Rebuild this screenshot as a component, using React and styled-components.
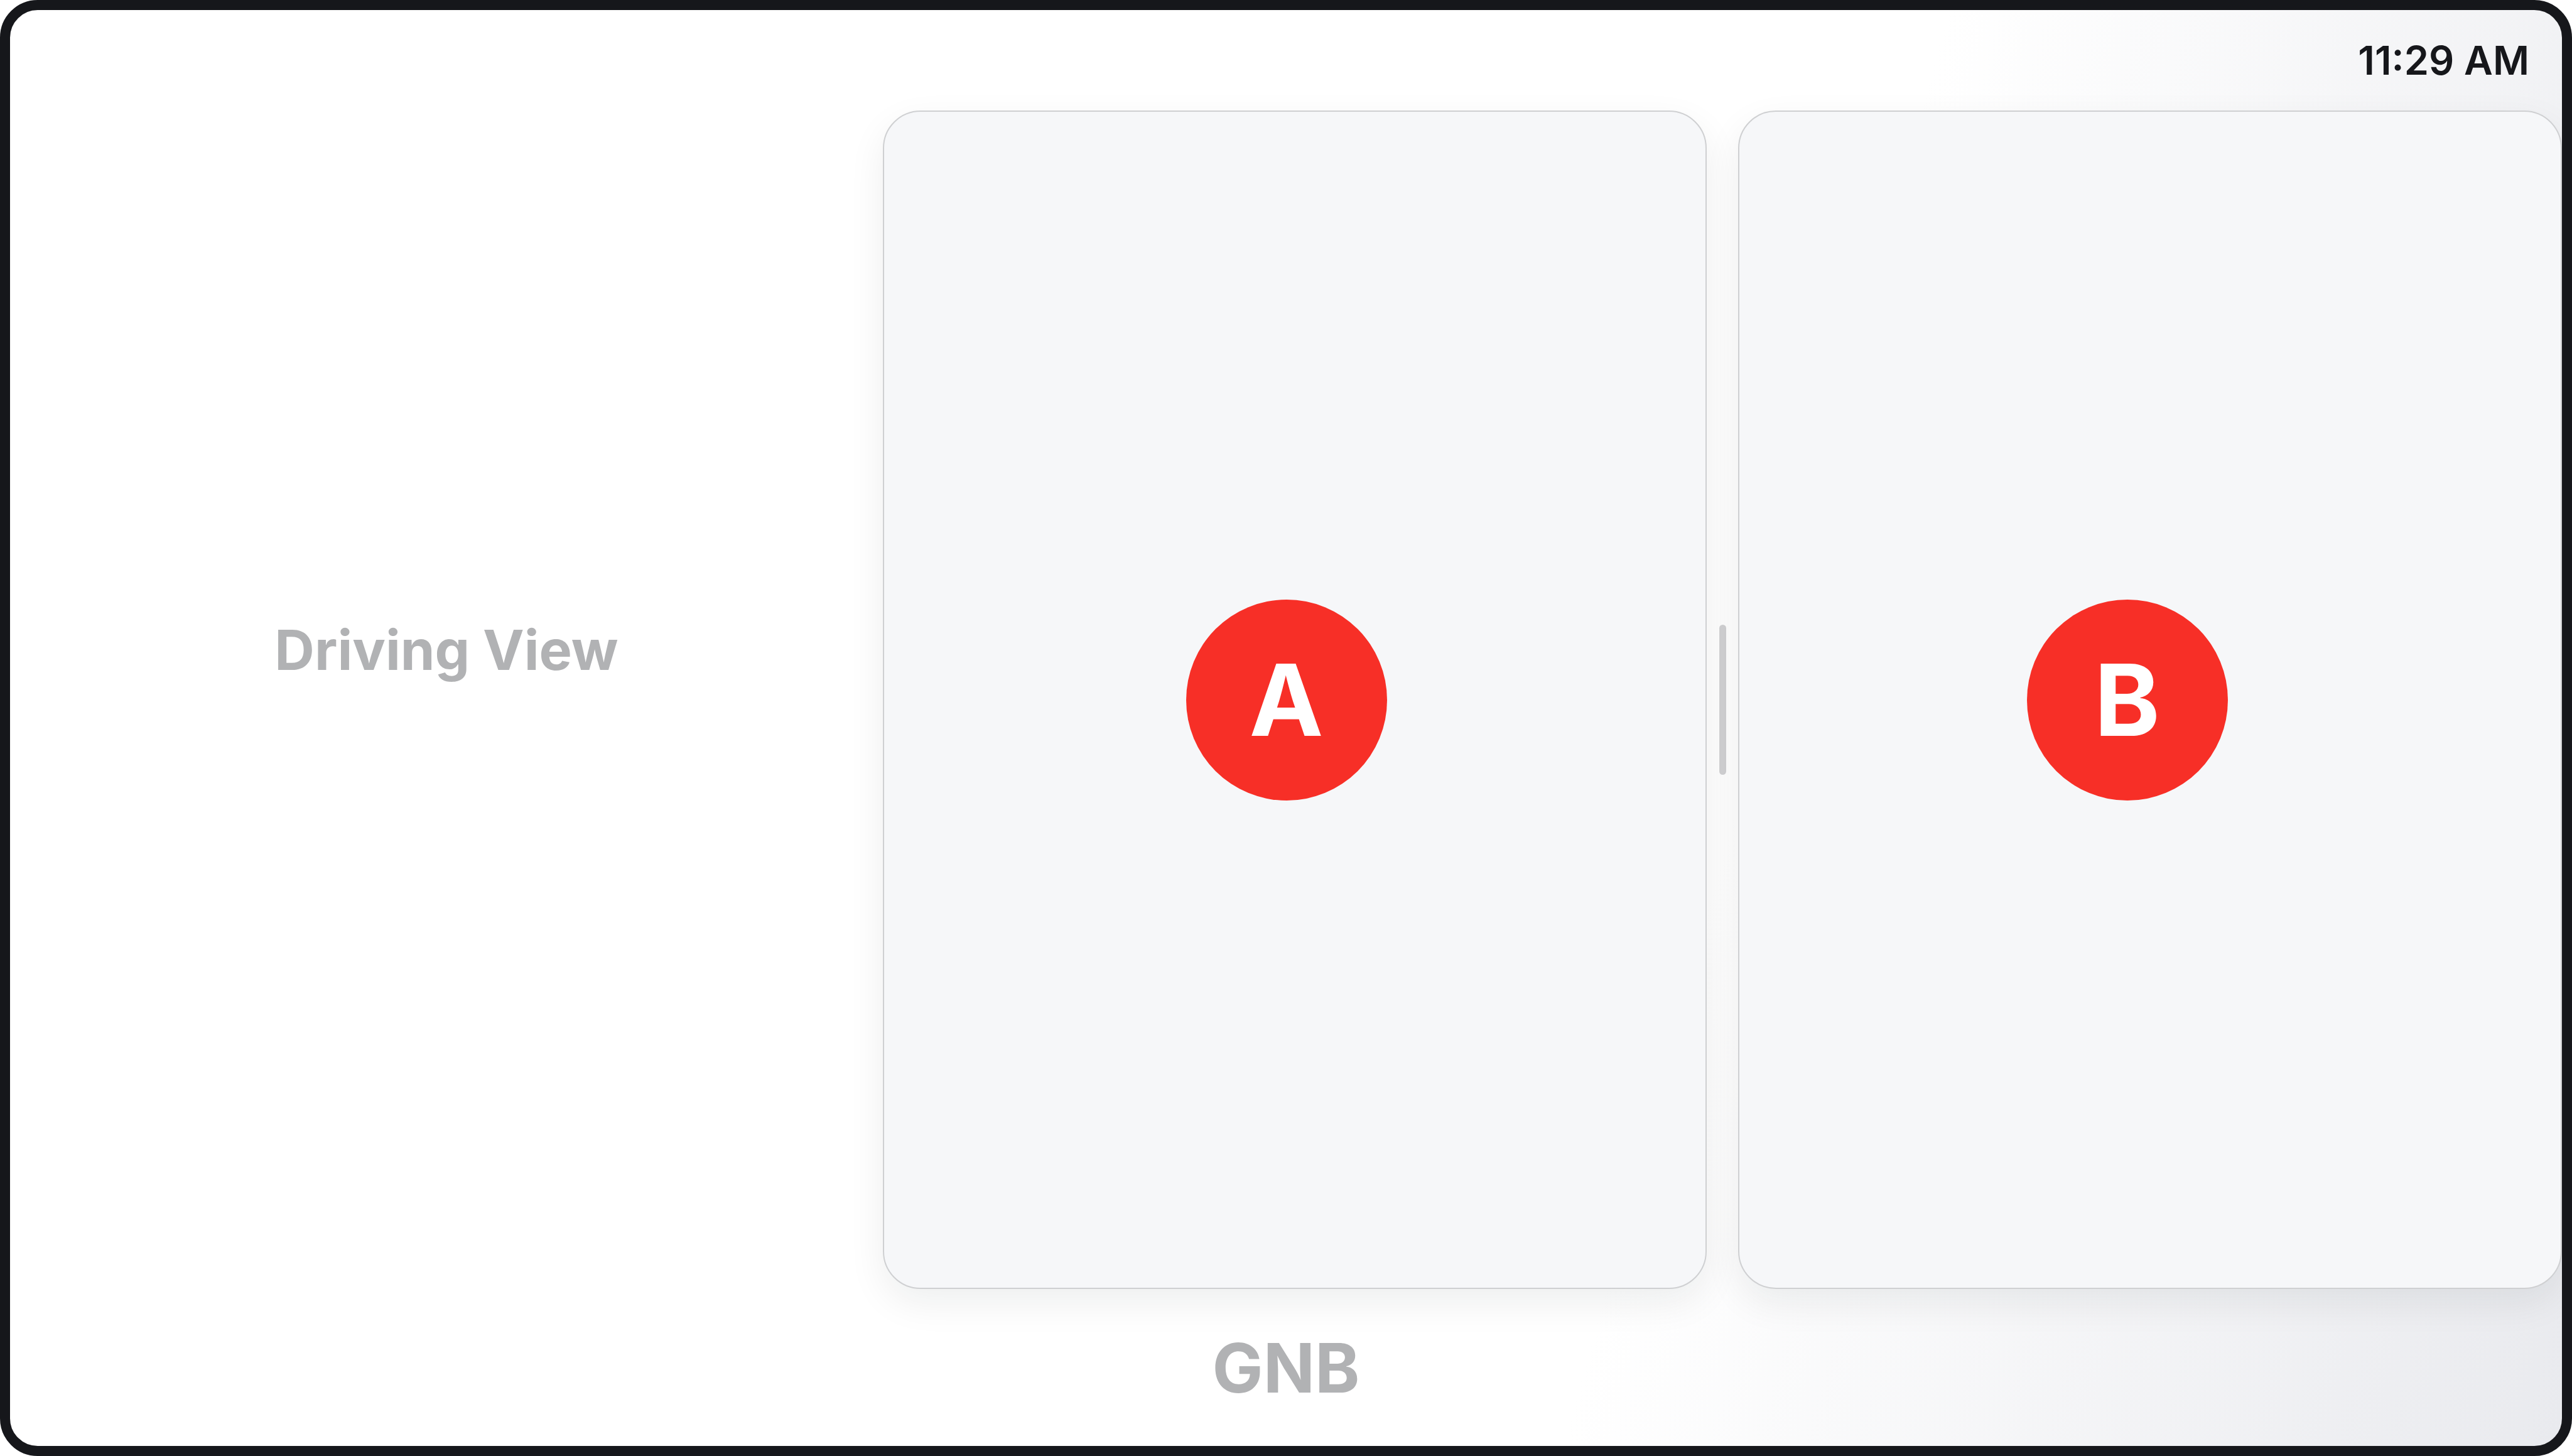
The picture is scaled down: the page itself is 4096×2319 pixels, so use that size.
import React from 'react'
import styled, { createGlobalStyle } from 'styled-components'

const GlobalStyle = createGlobalStyle`
  html, body {
    margin: 0;
    padding: 0;
    width: 100%;
    height: 100%;
    overflow: hidden;
    background: #ffffff;
  }
  #root {
    width: 100%;
    height: 100%;
  }
  * { box-sizing: border-box; }
`;

const panels = [
  { id: 'a', label: 'A', shift: 27 },
  { id: 'b', label: 'B', shift: 73 },
];

export default function App() {
  return (
    <>
      <GlobalStyle />
      <Frame>
        <Upper>
          <DrivingView>
            <Placeholder>Driving View</Placeholder>
          </DrivingView>
          <RightColumn>
            <StatusBar>
              <Clock>11:29 AM</Clock>
            </StatusBar>
            <Cards>
              <Card $shift={panels[0].shift}>
                <Badge>{panels[0].label}</Badge>
              </Card>
              <Divider>
                <Handle />
              </Divider>
              <Card $shift={panels[1].shift}>
                <Badge>{panels[1].label}</Badge>
              </Card>
            </Cards>
          </RightColumn>
        </Upper>
        <Gnb>
          <GnbLabel>GNB</GnbLabel>
        </Gnb>
      </Frame>
    </>
  )
}

const Frame = styled.div`
  width: 100vw;
  height: 100vh;
  border: 16px solid #16171b;
  border-radius: 60px;
  overflow: hidden;
  display: grid;
  grid-template-rows: 1fr 250px;
  background: linear-gradient(105deg, #ffffff 66%, #e9eaee 100%);
  font-family: Inter, "Noto Sans", "Liberation Sans", sans-serif;
`;

const Upper = styled.div`
  display: grid;
  grid-template-columns: 1390px 1fr;
  min-height: 0;
`;

const DrivingView = styled.div`
  display: flex;
  align-items: center;
  justify-content: center;
`;

const Placeholder = styled.span`
  font-size: 88px;
  font-weight: 700;
  color: #b1b2b4;
`;

const RightColumn = styled.div`
  display: flex;
  flex-direction: column;
  min-height: 0;
`;

const StatusBar = styled.div`
  height: 160px;
  display: flex;
  align-items: center;
  justify-content: flex-end;
  padding-right: 52px;
`;

const Clock = styled.span`
  font-size: 63px;
  font-weight: 600;
  color: #16171b;
`;

const Cards = styled.div`
  flex: 1;
  display: grid;
  grid-template-columns: 1fr 50px 1fr;
  min-height: 0;
`;

const Card = styled.div`
  display: flex;
  align-items: center;
  justify-content: center;
  padding-right: ${p => p.$shift}px;
  background: #f6f7f9;
  border: 2px solid #cfd0d2;
  border-radius: 60px;
  box-shadow: 0 22px 60px rgba(20, 22, 30, 0.07);
`;

const Badge = styled.div`
  width: 320px;
  height: 320px;
  border-radius: 50%;
  background: #f72f27;
  color: #ffffff;
  display: flex;
  align-items: center;
  justify-content: center;
  font-size: 158px;
  font-weight: 700;
  line-height: 1;
`;

const Divider = styled.div`
  display: flex;
  align-items: center;
  justify-content: center;
`;

const Handle = styled.div`
  width: 11px;
  height: 239px;
  border-radius: 6px;
  background: #cfcfd1;
`;

const Gnb = styled.div`
  display: flex;
  align-items: center;
  justify-content: center;
`;

const GnbLabel = styled.span`
  font-size: 108px;
  font-weight: 700;
  color: #b1b2b4;
`;
